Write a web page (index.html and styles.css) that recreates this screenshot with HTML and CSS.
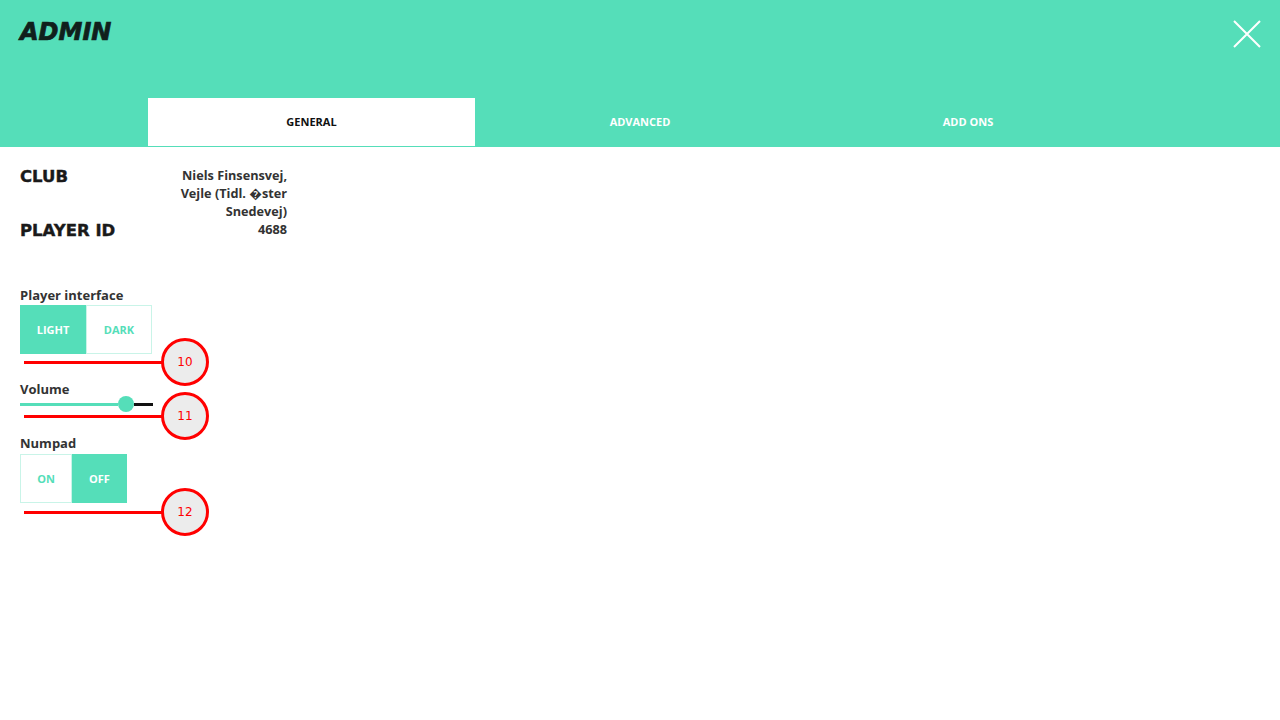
FILE: index.html
```html
<!DOCTYPE html>
<html lang="en">
<head>
<meta charset="utf-8">
<title>Admin</title>
<link rel="stylesheet" href="styles.css">
</head>
<body>
<header class="header">
  <div class="topbar">
    <h1 class="brand">ADMIN</h1>
    <button class="close" aria-label="Close">
      <svg width="28" height="28" viewBox="0 0 28 28"><path d="M1 1 L27 27 M27 1 L1 27" stroke="#fff" stroke-width="2" fill="none"/></svg>
    </button>
  </div>
  <nav class="tabs">
    <div class="tab active">GENERAL</div>
    <div class="tab">ADVANCED</div>
    <div class="tab">ADD ONS</div>
  </nav>
</header>
<main class="content">
  <div class="info">
    <div class="info-label">CLUB</div>
    <div class="info-value">Niels Finsensvej, Vejle (Tidl. &#xFFFD;ster Snedevej)</div>
    <div class="info-label">PLAYER ID</div>
    <div class="info-value">4688</div>
  </div>

  <section class="setting s-interface">
    <div class="setting-label">Player interface</div>
    <div class="toggle">
      <div class="opt on w66">LIGHT</div>
      <div class="opt w66">DARK</div>
    </div>
    <div class="marker"><span class="mline"></span><span class="mcircle">10</span></div>
  </section>

  <section class="setting s-volume">
    <div class="setting-label">Volume</div>
    <div class="slider">
      <span class="track-fill"></span>
      <span class="thumb"></span>
      <span class="track-rest"></span>
    </div>
    <div class="marker"><span class="mline"></span><span class="mcircle">11</span></div>
  </section>

  <section class="setting s-numpad">
    <div class="setting-label">Numpad</div>
    <div class="toggle">
      <div class="opt w52">ON</div>
      <div class="opt on w55">OFF</div>
    </div>
    <div class="marker"><span class="mline"></span><span class="mcircle">12</span></div>
  </section>
</main>
</body>
</html>
```
FILE: styles.css
```css
* { box-sizing: border-box; }
html, body { margin: 0; padding: 0; }
body {
  width: 1280px;
  height: 720px;
  background: #fff;
  font-family: "Open Sans", "DejaVu Sans", sans-serif;
  color: #333;
  overflow: hidden;
}
.header {
  background: #55deb9;
  height: 147px;
  display: flex;
  flex-direction: column;
}
.topbar {
  height: 98px;
  display: flex;
  justify-content: space-between;
  align-items: flex-start;
  padding: 0 20px;
}
.brand {
  margin: 18px 0 0 0;
  font-family: "DejaVu Sans", sans-serif;
  font-size: 24px;
  line-height: 28px;
  font-weight: 700;
  font-style: italic;
  color: #10201c;
  -webkit-text-stroke: 0.7px #10201c;
}
.close {
  margin-top: 20px;
  width: 28px;
  height: 28px;
  padding: 0;
  border: 0;
  background: none;
  display: block;
  margin-right: -1px;
}
.close svg { display: block; }
.tabs {
  display: flex;
  padding-left: 148px;
  height: 48px;
}
.tab {
  width: 328px;
  display: flex;
  align-items: center;
  justify-content: center;
  font-size: 11px;
  font-weight: 700;
  color: #fff;
  padding-bottom: 2px;
}
.tab.active {
  background: #fff;
  color: #111;
  width: 327px;
  margin-right: 1px;
}
.content {
  padding: 19px 20px 0 20px;
}
.info {
  display: grid;
  grid-template-columns: 150px 117px;
  width: 267px;
}
.info-label {
  font-family: "DejaVu Sans", sans-serif;
  font-size: 16.5px;
  line-height: 20px;
  font-weight: 700;
  color: #1a1a1a;
  padding-top: 1px;
  -webkit-text-stroke: 0.4px #1a1a1a;
}
.info-value {
  font-size: 12.7px;
  line-height: 18px;
  font-weight: 700;
  text-align: right;
  color: #333;
}
.setting {
  position: relative;
  width: 200px;
}
.setting-label {
  font-size: 13px;
  line-height: 16px;
  font-weight: 700;
  color: #333;
}
.s-interface { margin-top: 46px; }
.s-interface .setting-label { margin-bottom: 2px; }
.s-volume { margin-top: 27px; }
.s-numpad { margin-top: 23px; }
.s-numpad .setting-label { margin-bottom: 3px; }
.toggle {
  display: flex;
  height: 49px;
}
.opt {
  display: flex;
  align-items: center;
  justify-content: center;
  font-size: 11px;
  font-weight: 700;
  color: #55deb9;
  background: #fff;
  border: 1px solid #c9f4e8;
}
.opt.on {
  background: #55deb9;
  color: #fff;
  border-color: #55deb9;
}
.w66 { width: 66px; }
.w52 { width: 52px; }
.w55 { width: 55px; }
.slider {
  display: flex;
  align-items: center;
  width: 133px;
  height: 16px;
  margin-top: -1px;
}
.track-fill {
  width: 98px;
  height: 3px;
  background: #55deb9;
}
.thumb {
  width: 16px;
  height: 16px;
  border-radius: 50%;
  background: #55deb9;
}
.track-rest {
  flex: 1;
  height: 3px;
  background: #111;
}
.marker {
  position: absolute;
  left: 4px;
  display: flex;
  align-items: center;
}
.s-interface .marker { top: 51px; }
.s-volume .marker { top: 11px; }
.s-numpad .marker { top: 53px; }
.mline {
  width: 139px;
  height: 3px;
  background: #f00;
}
.mcircle {
  width: 48px;
  height: 48px;
  border: 3px solid #f00;
  border-radius: 50%;
  background: #ececec;
  color: #f00;
  font-family: "DejaVu Sans", sans-serif;
  font-size: 12px;
  display: flex;
  align-items: center;
  justify-content: center;
  margin-left: -2px;
}
```
